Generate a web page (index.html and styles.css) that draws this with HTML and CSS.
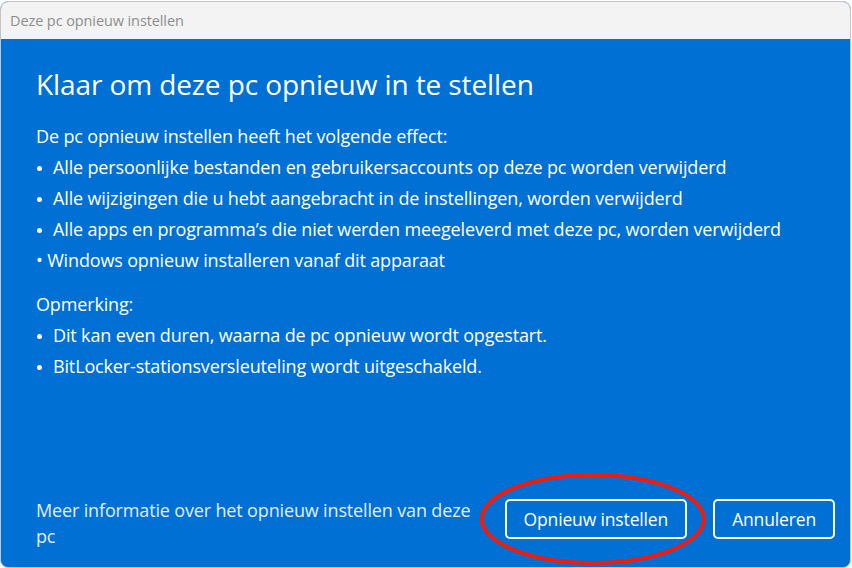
FILE: index.html
```html
<!DOCTYPE html>
<html lang="nl">
<head>
<meta charset="utf-8">
<title>Deze pc opnieuw instellen</title>
<link rel="stylesheet" href="styles.css">
</head>
<body>
<div class="window">
  <div class="titlebar">Deze pc opnieuw instellen</div>
  <div class="content">
    <h1 class="heading">Klaar om deze pc opnieuw in te stellen</h1>
    <p class="line">De pc opnieuw instellen heeft het volgende effect:</p>
    <ul class="bullets">
      <li>Alle persoonlijke bestanden en gebruikersaccounts op deze pc worden verwijderd</li>
      <li>Alle wijzigingen die u hebt aangebracht in de instellingen, worden verwijderd</li>
      <li>Alle apps en programma’s die niet werden meegeleverd met deze pc, worden verwijderd</li>
    </ul>
    <p class="line">• Windows opnieuw installeren vanaf dit apparaat</p>
    <p class="line note">Opmerking:</p>
    <ul class="bullets">
      <li>Dit kan even duren, waarna de pc opnieuw wordt opgestart.</li>
      <li>BitLocker-stationsversleuteling wordt uitgeschakeld.</li>
    </ul>
    <div class="footer">
      <p class="info">Meer informatie over het opnieuw instellen van deze pc</p>
      <div class="buttons">
        <button class="btn">Opnieuw instellen</button>
        <button class="btn">Annuleren</button>
      </div>
    </div>
  </div>
</div>
<svg class="annotation" width="240" height="100" viewBox="0 0 240 100">
  <ellipse cx="120" cy="50" rx="111" ry="44" fill="none" stroke="#ee1c0e" stroke-width="4"/>
</svg>
</body>
</html>
```
FILE: styles.css
```css
html, body {
  margin: 0;
  padding: 0;
  background: #ffffff;
}
body {
  width: 852px;
  height: 568px;
  overflow: hidden;
  position: relative;
  font-family: "Open Sans", "Noto Sans", sans-serif;
}
.window {
  margin-top: 1px;
  width: 849px;
  height: 565px;
  border: 1px solid #c4c4c4;
  border-radius: 8px;
  overflow: hidden;
  display: flex;
  flex-direction: column;
  background: #0070d4;
}
.titlebar {
  height: 37px;
  flex: none;
  background: #f3f3f3;
  color: #8e8e8e;
  font-size: 14.5px;
  line-height: 37px;
  padding-left: 9px;
  letter-spacing: -0.1px;
}
.content {
  flex: 1;
  display: flex;
  flex-direction: column;
  padding: 0 15px 18px 35px;
  color: #ffffff;
}
.heading {
  margin: 25px 0 17px;
  font-weight: 400;
  font-size: 28px;
  line-height: 40px;
  letter-spacing: -0.1px;
}
.line {
  margin: 0;
  font-size: 18px;
  line-height: 31px;
  letter-spacing: -0.15px;
}
.bullets {
  margin: 0;
  padding: 0;
  list-style: none;
}
.bullets li {
  position: relative;
  padding-left: 17px;
  font-size: 18px;
  line-height: 31px;
  letter-spacing: -0.15px;
}
.bullets li::before {
  content: "";
  position: absolute;
  left: 1px;
  top: 14px;
  width: 5px;
  height: 5px;
  border-radius: 50%;
  background: #ffffff;
}
.note {
  margin-top: 13px;
}
.footer {
  margin-top: auto;
  display: flex;
  align-items: flex-start;
  justify-content: space-between;
}
.info {
  margin: 0;
  width: 440px;
  font-size: 18px;
  line-height: 26px;
  letter-spacing: -0.15px;
  color: #e3edf8;
}
.buttons {
  display: flex;
  gap: 26px;
  margin-top: 2px;
}
.btn {
  height: 40px;
  padding: 0 17px;
  border: 2px solid #ffffff;
  border-radius: 5px;
  background: transparent;
  color: #ffffff;
  font-family: inherit;
  font-size: 17.5px;
  letter-spacing: -0.15px;
}
.annotation {
  position: absolute;
  left: 473px;
  top: 469px;
}
```
